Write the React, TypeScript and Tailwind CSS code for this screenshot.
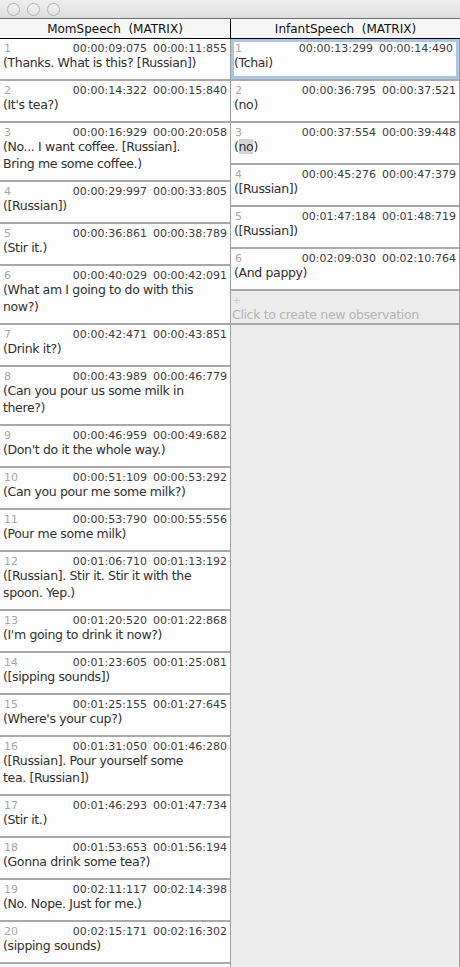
const FONT = { fontFamily: '"DejaVu Sans", Verdana, sans-serif' };

type Obs = { n: number; on: string; off: string; lines: string[] };

const mom: Obs[] = [
  { n: 1, on: "00:00:09:075", off: "00:00:11:855", lines: ["(Thanks. What is this? [Russian])"] },
  { n: 2, on: "00:00:14:322", off: "00:00:15:840", lines: ["(It's tea?)"] },
  { n: 3, on: "00:00:16:929", off: "00:00:20:058", lines: ["(No... I want coffee. [Russian].", "Bring me some coffee.)"] },
  { n: 4, on: "00:00:29:997", off: "00:00:33:805", lines: ["([Russian])"] },
  { n: 5, on: "00:00:36:861", off: "00:00:38:789", lines: ["(Stir it.)"] },
  { n: 6, on: "00:00:40:029", off: "00:00:42:091", lines: ["(What am I going to do with this", "now?)"] },
  { n: 7, on: "00:00:42:471", off: "00:00:43:851", lines: ["(Drink it?)"] },
  { n: 8, on: "00:00:43:989", off: "00:00:46:779", lines: ["(Can you pour us some milk in", "there?)"] },
  { n: 9, on: "00:00:46:959", off: "00:00:49:682", lines: ["(Don't do it the whole way.)"] },
  { n: 10, on: "00:00:51:109", off: "00:00:53:292", lines: ["(Can you pour me some milk?)"] },
  { n: 11, on: "00:00:53:790", off: "00:00:55:556", lines: ["(Pour me some milk)"] },
  { n: 12, on: "00:01:06:710", off: "00:01:13:192", lines: ["([Russian]. Stir it. Stir it with the", "spoon. Yep.)"] },
  { n: 13, on: "00:01:20:520", off: "00:01:22:868", lines: ["(I'm going to drink it now?)"] },
  { n: 14, on: "00:01:23:605", off: "00:01:25:081", lines: ["([sipping sounds])"] },
  { n: 15, on: "00:01:25:155", off: "00:01:27:645", lines: ["(Where's your cup?)"] },
  { n: 16, on: "00:01:31:050", off: "00:01:46:280", lines: ["([Russian]. Pour yourself some", "tea. [Russian])"] },
  { n: 17, on: "00:01:46:293", off: "00:01:47:734", lines: ["(Stir it.)"] },
  { n: 18, on: "00:01:53:653", off: "00:01:56:194", lines: ["(Gonna drink some tea?)"] },
  { n: 19, on: "00:02:11:117", off: "00:02:14:398", lines: ["(No. Nope. Just for me.)"] },
  { n: 20, on: "00:02:15:171", off: "00:02:16:302", lines: ["(sipping sounds)"] },
];

const infant: Obs[] = [
  { n: 1, on: "00:00:13:299", off: "00:00:14:490", lines: ["(Tchai)"] },
  { n: 2, on: "00:00:36:795", off: "00:00:37:521", lines: ["(no)"] },
  { n: 3, on: "00:00:37:554", off: "00:00:39:448", lines: ["(no)"] },
  { n: 4, on: "00:00:45:276", off: "00:00:47:379", lines: ["([Russian])"] },
  { n: 5, on: "00:01:47:184", off: "00:01:48:719", lines: ["([Russian])"] },
  { n: 6, on: "00:02:09:030", off: "00:02:10:764", lines: ["(And pappy)"] },
];

const CellBody = ({ o, highlight }: { o: Obs; highlight?: boolean }) => (
  <>
    <div className="flex justify-between h-[11px] text-[11px] leading-[11px] whitespace-nowrap">
      <span className="text-[#a8a8a8] pl-[1px]">{o.n}</span>
      <span className="flex gap-[6px] text-[#3c3c3c]">
        <span>{o.on}</span>
        <span>{o.off}</span>
      </span>
    </div>
    {o.lines.map((l, i) => (
      <div key={i} className="text-[12.5px] tracking-[-0.35px] leading-[17px] text-[#303030] whitespace-nowrap">
        {highlight ? (
          <>
            (<span className="bg-[#d3d3d3]">no</span>)
          </>
        ) : (
          l
        )}
      </div>
    ))}
  </>
);

const Cell = ({ o, highlight }: { o: Obs; highlight?: boolean }) => (
  <div className="bg-[#fdfdfd] border-b-2 border-[#a9a9a9] pt-[4px] pb-[8px] px-[3px]">
    <CellBody o={o} highlight={highlight} />
  </div>
);

const SelectedCell = ({ o }: { o: Obs }) => (
  <div className="bg-[#fdfdfd] border-b-2 border-[#a9a9a9]">
    <div className="border-[3px] border-[#aac4e4] pt-[1px] pb-[5px] pr-[3px]">
      <CellBody o={o} />
    </div>
  </div>
);

const Circle = () => (
  <div className="w-[13px] h-[13px] rounded-full border border-[#b3b3b3] bg-gradient-to-b from-[#f4f4f4] to-[#e2e2e2]" />
);

export default function App() {
  return (
    <div className="w-[460px] h-[967px] overflow-hidden bg-[#ececec] flex flex-col" style={FONT}>
      <div className="h-[19px] shrink-0 border-b border-[#6f6f6f] bg-gradient-to-b from-[#eeeeee] to-[#dedede] flex items-center gap-[7px] pl-[7px]">
        <Circle />
        <Circle />
        <Circle />
      </div>

      <div className="flex h-[20px] shrink-0 border-b border-black bg-[#f6f6f6] text-[12px] leading-[16px] text-[#111] whitespace-pre">
        <div className="w-[231px] border-r border-black pt-[2px] text-center">MomSpeech  (MATRIX)</div>
        <div className="flex-1 pt-[2px] text-center">InfantSpeech  (MATRIX)</div>
      </div>

      <div className="flex flex-1 min-h-0">
        <div className="w-[231px] shrink-0 border-r border-[#9f9f9f] bg-[#fdfdfd]">
          {mom.map((o) => (
            <Cell key={o.n} o={o} />
          ))}
        </div>

        <div className="flex-1 border-r border-[#a0a0a0]">
          {infant.map((o) =>
            o.n === 1 ? <SelectedCell key={o.n} o={o} /> : <Cell key={o.n} o={o} highlight={o.n === 3} />
          )}
          <div className="border-b-2 border-[#a9a9a9] pt-[4px] px-[1px]">
            <div className="h-[11px] text-[11px] leading-[11px] text-[#cdcdcd]">+</div>
            <div className="text-[12.5px] tracking-[-0.35px] leading-[17px] text-[#b4b4b4] whitespace-nowrap">
              Click to create new observation
            </div>
          </div>
        </div>
      </div>
    </div>
  );
}
